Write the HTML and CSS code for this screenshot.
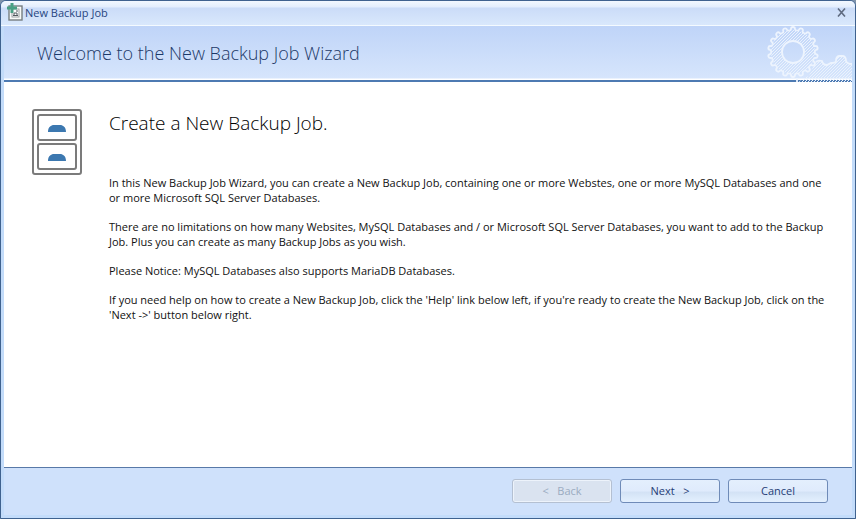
FILE: index.html
```
<!DOCTYPE html>
<html lang="en">
<head>
    <meta charset="UTF-8">
    <meta name="viewport" content="width=device-width, initial-scale=1.0">
    <title>New Backup Job</title>
    <link rel="stylesheet" href="styles.css">
</head>
<body>
    <div class="window">
        <div class="titlebar">
            <svg class="app-icon" width="16" height="18" viewBox="0 0 16 18">
                <rect x="2" y="3" width="13" height="14" fill="#f8faf8" stroke="#777e80" stroke-width="1.400"/>
                <rect x="5" y="6" width="7" height="8" fill="#fff" stroke="#9aa0a2"/>
                <path d="M6 12.500h5M7 12v-2h3v2M9 8h2" fill="none" stroke="#50585c"/>
                <path d="M5 0v10M0 5h10" stroke="#48a084" stroke-width="3"/>
            </svg>
            <span class="title">New Backup Job</span>
            <button class="close" aria-label="Close">
                <svg width="9" height="9" viewBox="0 0 9 9">
                    <path d="M1 0.500l7 8M8 0.500l-7 8" stroke="#5f6b80" stroke-width="1.600"/>
                </svg>
            </button>
        </div>
        <header class="banner">
            <h1>Welcome to the New Backup Job Wizard</h1>
            <svg class="gears" width="87" height="56" viewBox="0 0 87 56">
                <defs>
                    <pattern id="hatch" width="3" height="3" patternUnits="userSpaceOnUse">
                        <path d="M-1 1l2 -2M0 3l3 -3M2 4l2 -2" stroke="#eaf2fd" stroke-width="1"/>
                    </pattern>
                    <path id="tooth" d="M-3.800 -21.700Q-2 -21.500 -2 -23Q-1.900 -25 0 -25Q1.900 -25 2 -23Q2 -21.500 3.800 -21.700"/>
                </defs>
                <path d="M28 4a22 22 0 1 0 0.010 0zM28 15a11 11 0 1 1 -0.010 0z" fill="url(#hatch)" fill-rule="evenodd"/>
                <path d="M33 56C38 54 40 51 44 50L48 41C51 35 54 33 57 35Q58 39 62 39L66 37Q71 37 71 35Q71 30 75 30H77Q81 30 81 35Q82 38 87 38V56z" fill="url(#hatch)"/>
                <g fill="none" stroke="#edf4fe" stroke-width="1.800">
                    <circle cx="28" cy="26" r="11"/>
                    <g transform="translate(28 26)">
                        <use href="#tooth"/>
                        <use href="#tooth" transform="rotate(20)"/>
                        <use href="#tooth" transform="rotate(40)"/>
                        <use href="#tooth" transform="rotate(60)"/>
                        <use href="#tooth" transform="rotate(80)"/>
                        <use href="#tooth" transform="rotate(100)"/>
                        <use href="#tooth" transform="rotate(120)"/>
                        <use href="#tooth" transform="rotate(140)"/>
                        <use href="#tooth" transform="rotate(160)"/>
                        <use href="#tooth" transform="rotate(180)"/>
                        <use href="#tooth" transform="rotate(200)"/>
                        <use href="#tooth" transform="rotate(220)"/>
                        <use href="#tooth" transform="rotate(240)"/>
                        <use href="#tooth" transform="rotate(260)"/>
                        <use href="#tooth" transform="rotate(280)"/>
                        <use href="#tooth" transform="rotate(300)"/>
                        <use href="#tooth" transform="rotate(320)"/>
                        <use href="#tooth" transform="rotate(340)"/>
                    </g>
                    <path d="M51 36Q53 34 57 35Q58 39 62 39L66 37Q71 37 71 35Q71 30 75 30H77Q81 30 81 35Q82 38 87 38"/>
                    <path d="M32 52V56"/>
                </g>
            </svg>
        </header>
        <main class="content">
            <svg class="cabinet" width="50" height="66" viewBox="0 0 50 66">
                <g fill="#fff" stroke="#7b7b7b" stroke-width="2">
                    <rect x="1" y="1" width="48" height="64" rx="2"/>
                    <rect x="6" y="6" width="38" height="25" rx="2"/>
                    <rect x="6" y="35" width="38" height="25" rx="2"/>
                </g>
                <path d="M16 23C16 18 19 16 22 16H28C31 16 34 18 34 23zM16 52C16 47 19 45 22 45H28C31 45 34 47 34 52z" fill="#3c78b0"/>
            </svg>
            <div class="text">
                <h2>Create a New Backup Job.</h2>
                <p>In this New Backup Job Wizard, you can create a New Backup Job, containing one or more Webstes, one or more MySQL Databases and one<br>or more Microsoft SQL Server Databases.</p>
                <p>There are no limitations on how many Websites, MySQL Databases and / or Microsoft SQL Server Databases, you want to add to the Backup<br>Job. Plus you can create as many Backup Jobs as you wish.</p>
                <p>Please Notice: MySQL Databases also supports MariaDB Databases.</p>
                <p>If you need help on how to create a New Backup Job, click the 'Help' link below left, if you're ready to create the New Backup Job, click on the<br>'Next -&gt;' button below right.</p>
            </div>
        </main>
        <footer class="buttons">
            <button class="btn" disabled>&lt; &nbsp; Back</button>
            <button class="btn">Next &nbsp; &gt;</button>
            <button class="btn">Cancel</button>
        </footer>
    </div>
</body>
</html>
```
FILE: styles.css
```
* {
    box-sizing: border-box;
}

body {
    margin: 0;
    background-color: #7f93ab;
    font-family: "Open Sans", "Noto Sans", sans-serif;
    font-size: 11px;
    color: #111;
}

.window {
    display: flex;
    flex-direction: column;
    min-height: 100vh;
    padding: 0 3px 3px;
    background-color: #c3dcfa;
    border: 1px solid #3f628f;
    border-radius: 6px 6px 0 0;
    overflow: hidden;
}

.titlebar {
    display: flex;
    align-items: center;
    height: 25px;
    margin: 0 -3px;
    padding: 0 6px 2px;
    background: linear-gradient(#f2f8ff 0, #e3eefd 6px, #cbdcf8 7px, #d9e8fc 100%);
    border-bottom: 1px solid #f4faff;
    color: #27457f;
}

.title {
    flex: 1;
    margin-left: 2px;
}

.close {
    display: flex;
    padding: 3px;
    background: none;
    border: none;
}

.banner {
    display: flex;
    align-items: center;
    justify-content: space-between;
    height: 56px;
    padding-left: 33px;
    background: linear-gradient(#bfd4f8, #d6e5fc 52px, #fff 53px, #fff 54px, #4d7ab2 54px);
}

.banner h1 {
    margin: 0 0 2px;
    font-size: 18px;
    font-weight: 300;
    line-height: 24px;
    color: #1c3968;
}

.content {
    display: flex;
    flex: 1;
    gap: 27px;
    padding: 27px 20px 28px 28px;
    background-color: #fff;
}

.cabinet {
    flex-shrink: 0;
}

.text h2 {
    margin: 0 0 38px;
    font-size: 19px;
    font-weight: 300;
    line-height: 28px;
    color: #000;
}

.text p {
    margin: 0 0 14px;
    line-height: 15px;
}

.buttons {
    display: flex;
    justify-content: flex-end;
    gap: 8px;
    height: 48px;
    padding: 11px 24px 0;
    background-color: #cfe1fb;
    border-top: 1px solid #5879a8;
}

.btn {
    width: 100px;
    height: 24px;
    padding: 0 0 2px;
    font-family: inherit;
    font-size: 11px;
    color: #1f3d75;
    background: linear-gradient(#e4effd, #dfebfc 50%, #d3e2f5 55%, #e3f0fe);
    border: 1px solid #6f8bb8;
    border-radius: 3px;
}

.btn:disabled {
    color: #9aabc0;
    background: #dae3f0;
    border-color: #b4c0d2;
    box-shadow: inset 0 0 0 1px #edf3fb;
}
```
